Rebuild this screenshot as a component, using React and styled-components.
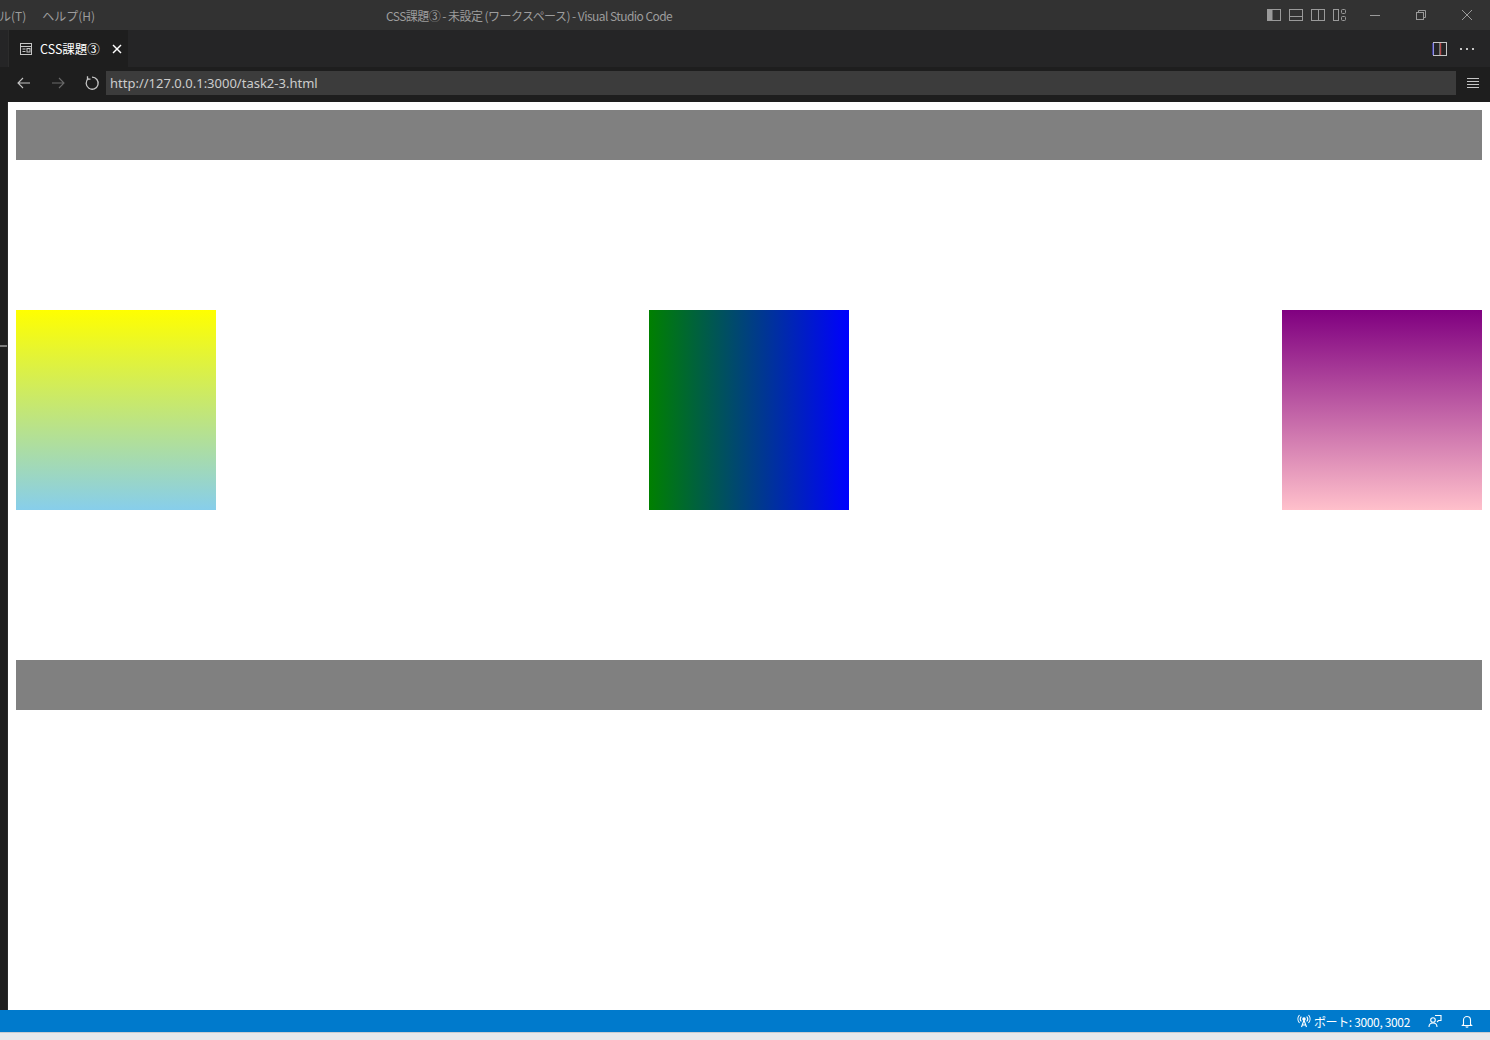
import React from "react";
import styled, { createGlobalStyle } from "styled-components";

const GlobalStyle = createGlobalStyle`
  html, body {
    margin: 0;
    padding: 0;
    background: #1e1e1e;
  }
  body {
    font-family: "Noto Sans CJK JP", "Noto Sans", "Liberation Sans", sans-serif;
  }
`;

const Window = styled.div`
  width: 1490px;
  height: 1040px;
  display: flex;
  flex-direction: column;
  overflow: hidden;
`;

const TitleBar = styled.div`
  height: 30px;
  background: #323232;
  display: flex;
  align-items: center;
  color: #9d9d9d;
  font-size: 12px;
  flex-shrink: 0;
`;

const Menu = styled.div`
  display: flex;
  gap: 16px;
  margin-left: -1px;
  width: 387px;
  white-space: nowrap;
`;

const Title = styled.div`
  flex: 1;
  letter-spacing: -0.55px;
`;

const TitleIcons = styled.div`
  display: flex;
  align-items: center;
  gap: 6px;
  margin-right: 4px;
`;

const WinButtons = styled.div`
  display: flex;
  align-items: center;
`;

const WinButton = styled.div`
  width: 46px;
  height: 30px;
  display: flex;
  align-items: center;
  justify-content: center;
`;

const TabBar = styled.div`
  height: 37px;
  background: #252526;
  display: flex;
  align-items: stretch;
  flex-shrink: 0;
`;

const Gutter = styled.div`
  width: 9px;
  background: #252526;
  border-right: 1px solid #2c2c2c;
  box-sizing: border-box;
`;

const Tab = styled.div`
  width: 119px;
  background: #1e1e1e;
  display: flex;
  align-items: center;
  padding-left: 10px;
  gap: 7px;
  box-sizing: border-box;
  color: #ffffff;
  font-size: 12.5px;
`;

const TabClose = styled.span`
  margin-left: 4px;
  display: flex;
`;

const TabActions = styled.div`
  margin-left: auto;
  display: flex;
  align-items: center;
  gap: 12px;
  padding-right: 16px;
`;

const Toolbar = styled.div`
  height: 35px;
  background: #1e1e1e;
  display: flex;
  align-items: flex-start;
  padding-top: 4px;
  box-sizing: border-box;
  flex-shrink: 0;
`;

const NavButtons = styled.div`
  display: flex;
  align-items: center;
  height: 24px;
  gap: 18px;
  padding-left: 16px;
  width: 90px;
`;

const UrlBox = styled.div`
  flex: 1;
  height: 24px;
  background: #3c3c3c;
  color: #cccccc;
  font-size: 13px;
  display: flex;
  align-items: center;
  padding-left: 4px;
  font-family: "Noto Sans", "Liberation Sans", sans-serif;
`;

const Hamburger = styled.div`
  width: 34px;
  height: 24px;
  display: flex;
  align-items: center;
  justify-content: center;
`;

const Main = styled.div`
  height: 908px;
  display: flex;
  flex-shrink: 0;
`;

const SideStrip = styled.div`
  width: 8px;
  background: #1e1e1e;
  border-right: 1px solid #2a2a2a;
  box-sizing: border-box;
  padding-top: 243px;
`;

const Marker = styled.div`
  height: 2px;
  width: 7px;
  background: #7a7a7a;
`;

const Webview = styled.div`
  flex: 1;
  background: #ffffff;
  padding: 8px;
`;

const Bar = styled.div`
  height: 50px;
  background: gray;
`;

const Row = styled.div`
  display: flex;
  justify-content: space-between;
  margin: 150px 0;
`;

const Box = styled.div`
  width: 200px;
  height: 200px;
  background: ${({ $bg }) => $bg};
`;

const StatusBar = styled.div`
  height: 22px;
  background: #007acc;
  color: #ffffff;
  font-size: 12px;
  display: flex;
  align-items: center;
  justify-content: flex-end;
  padding-right: 16px;
  gap: 18px;
  flex-shrink: 0;
`;

const StatusItem = styled.div`
  display: flex;
  align-items: center;
  gap: 3px;
  letter-spacing: -0.35px;
`;

const Taskbar = styled.div`
  flex: 1;
  background: #e6e8eb;
  border-top: 1px solid #c9cbcf;
`;

const LayoutIcon = ({ kind }) => (
  <svg width="16" height="16" viewBox="0 0 16 16" fill="none" stroke="#9a9a9a" strokeWidth="1">
    {kind === "left" && (
      <>
        <rect x="1.5" y="2.5" width="13" height="11" />
        <rect x="2" y="3" width="4.5" height="10" fill="#9a9a9a" stroke="none" />
      </>
    )}
    {kind === "bottom" && (
      <>
        <rect x="1.5" y="2.5" width="13" height="11" />
        <line x1="1.5" y1="9.5" x2="14.5" y2="9.5" />
      </>
    )}
    {kind === "right" && (
      <>
        <rect x="1.5" y="2.5" width="13" height="11" />
        <line x1="8.5" y1="2.5" x2="8.5" y2="13.5" />
      </>
    )}
    {kind === "custom" && (
      <>
        <rect x="1.5" y="2.5" width="5" height="11" />
        <rect x="9.5" y="2.5" width="4" height="4" rx="1" />
        <rect x="9.5" y="9.5" width="4" height="4" rx="1" />
      </>
    )}
  </svg>
);

const App = () => (
  <>
    <GlobalStyle />
    <Window>
      <TitleBar>
        <Menu>
          <span>ル(T)</span>
          <span>ヘルプ(H)</span>
        </Menu>
        <Title>CSS課題③ - 未設定 (ワークスペース) - Visual Studio Code</Title>
        <TitleIcons>
          <LayoutIcon kind="left" />
          <LayoutIcon kind="bottom" />
          <LayoutIcon kind="right" />
          <LayoutIcon kind="custom" />
        </TitleIcons>
        <WinButtons>
          <WinButton>
            <svg width="12" height="12" viewBox="0 0 12 12" stroke="#9a9a9a" strokeWidth="1">
              <line x1="1" y1="6.5" x2="11" y2="6.5" />
            </svg>
          </WinButton>
          <WinButton>
            <svg width="12" height="12" viewBox="0 0 12 12" fill="none" stroke="#9a9a9a" strokeWidth="1">
              <rect x="1.5" y="3.5" width="7" height="7" />
              <path d="M3.5 3.5V1.5h7v7h-2" />
            </svg>
          </WinButton>
          <WinButton>
            <svg width="12" height="12" viewBox="0 0 12 12" stroke="#9a9a9a" strokeWidth="1">
              <line x1="1" y1="1" x2="11" y2="11" />
              <line x1="11" y1="1" x2="1" y2="11" />
            </svg>
          </WinButton>
        </WinButtons>
      </TitleBar>

      <TabBar>
        <Gutter />
        <Tab>
          <svg width="14" height="14" viewBox="0 0 14 14" fill="none" stroke="#c5c5c5" strokeWidth="1">
            <rect x="1.5" y="1.5" width="11" height="11" />
            <line x1="1.5" y1="4.5" x2="12.5" y2="4.5" />
            <line x1="3.5" y1="7" x2="6.5" y2="7" />
            <line x1="3.5" y1="9.5" x2="6.5" y2="9.5" />
            <rect x="8" y="6.5" width="3" height="3.5" />
          </svg>
          <span>CSS課題③</span>
          <TabClose>
            <svg width="12" height="12" viewBox="0 0 12 12" stroke="#ffffff" strokeWidth="1.4">
              <line x1="2" y1="2" x2="10" y2="10" />
              <line x1="10" y1="2" x2="2" y2="10" />
            </svg>
          </TabClose>
        </Tab>
        <TabActions>
          <svg width="16" height="16" viewBox="0 0 16 16" fill="none" strokeWidth="1">
            <rect x="1.5" y="1.5" width="13" height="13" stroke="#c5c5c5" />
            <line x1="8" y1="2" x2="8" y2="14" stroke="#c5c5c5" />
            <line x1="1" y1="2" x2="1" y2="14" stroke="#5a5aff" />
            <line x1="8.7" y1="2" x2="8.7" y2="14" stroke="#c04040" />
          </svg>
          <svg width="14" height="4" viewBox="0 0 14 4" fill="#c5c5c5">
            <rect x="0" y="1" width="2" height="2" />
            <rect x="6" y="1" width="2" height="2" />
            <rect x="12" y="1" width="2" height="2" />
          </svg>
        </TabActions>
      </TabBar>

      <Toolbar>
        <NavButtons>
          <svg width="16" height="16" viewBox="0 0 16 16" fill="none" stroke="#c5c5c5" strokeWidth="1.1">
            <path d="M14 8H2M7 3L2 8l5 5" />
          </svg>
          <svg width="16" height="16" viewBox="0 0 16 16" fill="none" stroke="#6a6a6a" strokeWidth="1.1">
            <path d="M2 8h12M9 3l5 5-5 5" />
          </svg>
          <svg width="16" height="16" viewBox="0 0 16 16" fill="none" stroke="#c5c5c5" strokeWidth="1.3">
            <path d="M4.3 3.6A6 6 0 1 0 8 2.2" />
            <path d="M3.5 1.2v3h3" />
          </svg>
        </NavButtons>
        <UrlBox>http://127.0.0.1:3000/task2-3.html</UrlBox>
        <Hamburger>
          <svg width="14" height="12" viewBox="0 0 14 12" stroke="#c5c5c5" strokeWidth="1">
            <line x1="1" y1="1.5" x2="13" y2="1.5" />
            <line x1="1" y1="4.5" x2="13" y2="4.5" />
            <line x1="1" y1="7.5" x2="13" y2="7.5" />
            <line x1="1" y1="10.5" x2="13" y2="10.5" />
          </svg>
        </Hamburger>
      </Toolbar>

      <Main>
        <SideStrip>
          <Marker />
        </SideStrip>
        <Webview>
          <Bar />
          <Row>
            <Box $bg="linear-gradient(yellow, skyblue)" />
            <Box $bg="linear-gradient(to right, green, blue)" />
            <Box $bg="linear-gradient(purple, pink)" />
          </Row>
          <Bar />
        </Webview>
      </Main>

      <StatusBar>
        <StatusItem>
          <svg width="14" height="14" viewBox="0 0 14 14" fill="none" stroke="#ffffff" strokeWidth="1.1">
            <circle cx="7" cy="5" r="1.2" fill="#ffffff" />
            <path d="M7 6.2L4.5 13M7 6.2L9.5 13M5.3 11h3.4" />
            <path d="M4.3 2.5a3.8 3.8 0 0 0 0 5M9.7 2.5a3.8 3.8 0 0 1 0 5" />
            <path d="M2.5 1a6 6 0 0 0 0 8M11.5 1a6 6 0 0 1 0 8" />
          </svg>
          <span>ポート: 3000, 3002</span>
        </StatusItem>
        <svg width="14" height="14" viewBox="0 0 14 14" fill="none" stroke="#ffffff" strokeWidth="1.1">
          <circle cx="5" cy="6" r="2.3" />
          <path d="M1 13c0-2.5 1.8-4 4-4s4 1.5 4 4" />
          <path d="M7 1.5h6v5H10.5L9 8" />
        </svg>
        <svg width="14" height="14" viewBox="0 0 14 14" fill="none" stroke="#ffffff" strokeWidth="1.1">
          <path d="M3.5 10.5V6a3.5 3.5 0 0 1 7 0v4.5l1 1h-9z" />
          <path d="M5.8 12.5a1.3 1.3 0 0 0 2.4 0" />
        </svg>
      </StatusBar>
      <Taskbar />
    </Window>
  </>
);

export default App;
